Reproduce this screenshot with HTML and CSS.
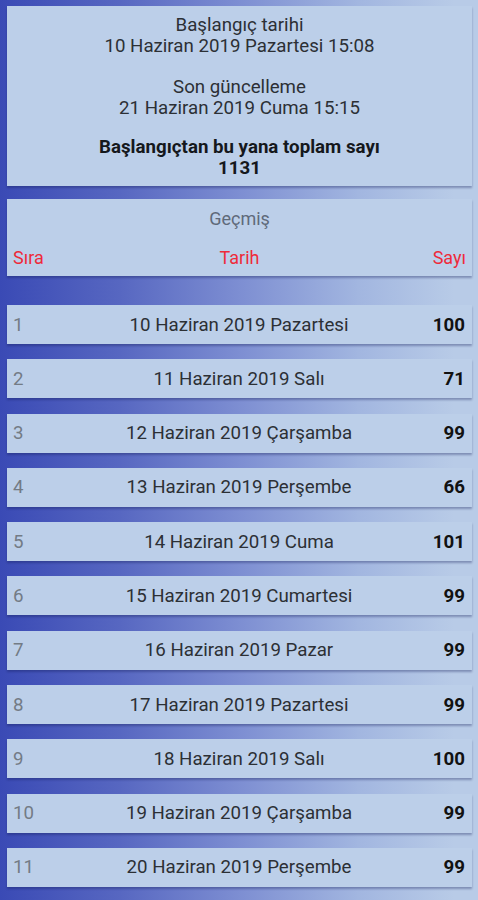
FILE: index.html
```html
<!DOCTYPE html>
<html lang="tr">
<head>
    <meta charset="UTF-8">
    <meta name="viewport" content="width=device-width, initial-scale=1.0">
    <title>Sayaç</title>
    <link rel="stylesheet" href="styles.css">
</head>
<body>
    <div class="card summary">
        <div class="block">
            <div>Başlangıç tarihi</div>
            <div>10 Haziran 2019 Pazartesi 15:08</div>
        </div>
        <div class="block">
            <div>Son güncelleme</div>
            <div>21 Haziran 2019 Cuma 15:15</div>
        </div>
        <div class="block total">
            <div>Başlangıçtan bu yana toplam sayı</div>
            <div>1131</div>
        </div>
    </div>

    <div class="card history-head">
        <div class="history-title">Geçmiş</div>
        <div class="cols">
            <span>Sıra</span>
            <span class="mid">Tarih</span>
            <span class="end">Sayı</span>
        </div>
    </div>

    <div class="rows">
        <div class="card row"><span class="num">1</span><span class="date">10 Haziran 2019 Pazartesi</span><span class="count">100</span></div>
        <div class="card row"><span class="num">2</span><span class="date">11 Haziran 2019 Salı</span><span class="count">71</span></div>
        <div class="card row"><span class="num">3</span><span class="date">12 Haziran 2019 Çarşamba</span><span class="count">99</span></div>
        <div class="card row"><span class="num">4</span><span class="date">13 Haziran 2019 Perşembe</span><span class="count">66</span></div>
        <div class="card row"><span class="num">5</span><span class="date">14 Haziran 2019 Cuma</span><span class="count">101</span></div>
        <div class="card row"><span class="num">6</span><span class="date">15 Haziran 2019 Cumartesi</span><span class="count">99</span></div>
        <div class="card row"><span class="num">7</span><span class="date">16 Haziran 2019 Pazar</span><span class="count">99</span></div>
        <div class="card row"><span class="num">8</span><span class="date">17 Haziran 2019 Pazartesi</span><span class="count">99</span></div>
        <div class="card row"><span class="num">9</span><span class="date">18 Haziran 2019 Salı</span><span class="count">100</span></div>
        <div class="card row"><span class="num">10</span><span class="date">19 Haziran 2019 Çarşamba</span><span class="count">99</span></div>
        <div class="card row"><span class="num">11</span><span class="date">20 Haziran 2019 Perşembe</span><span class="count">99</span></div>
    </div>
</body>
</html>
```

FILE: styles.css
```css
html {
    height: 100%;
}

body {
    margin: 0;
    padding: 6px 6px 0 7px;
    min-height: 100%;
    box-sizing: border-box;
    font-family: Roboto, "Noto Sans", sans-serif;
    font-size: 18.7px;
    color: #2c3035;
    background: linear-gradient(to right, #3a4ab5 0%, #5767c1 25%, #7d8ed2 50%, #a2b6e0 75%, #b8cbe7 95%);
    overflow: hidden;
}

.card {
    background: #bccfe9;
    box-shadow: 0 2px 2px rgba(20, 30, 90, 0.35);
}

.summary {
    height: 180px;
    box-sizing: border-box;
    padding-top: 9px;
    text-align: center;
    line-height: 21.3px;
}

.block + .block {
    margin-top: 19px;
}

.block.total {
    margin-top: 18px;
    font-weight: bold;
    color: #15181c;
}

.history-head {
    margin-top: 13px;
    height: 77px;
    box-sizing: border-box;
    padding: 9px 6px 0 6px;
    font-size: 18px;
}

.history-title {
    text-align: center;
    color: #5f6a7a;
    line-height: 22px;
}

.cols {
    display: flex;
    margin-top: 18px;
    color: #ee2a3a;
    line-height: 20px;
}

.cols span {
    flex: 1;
}

.cols .mid {
    text-align: center;
}

.cols .end {
    text-align: right;
}

.rows {
    margin-top: 29px;
    display: flex;
    flex-direction: column;
    gap: 15.3px;
}

.row {
    height: 39px;
    display: flex;
    align-items: center;
    padding: 0 7px 0 6px;
}

.num {
    width: 60px;
    color: #737b85;
}

.date {
    flex: 1;
    text-align: center;
}

.count {
    width: 60px;
    text-align: right;
    font-weight: bold;
    color: #111;
}
```
